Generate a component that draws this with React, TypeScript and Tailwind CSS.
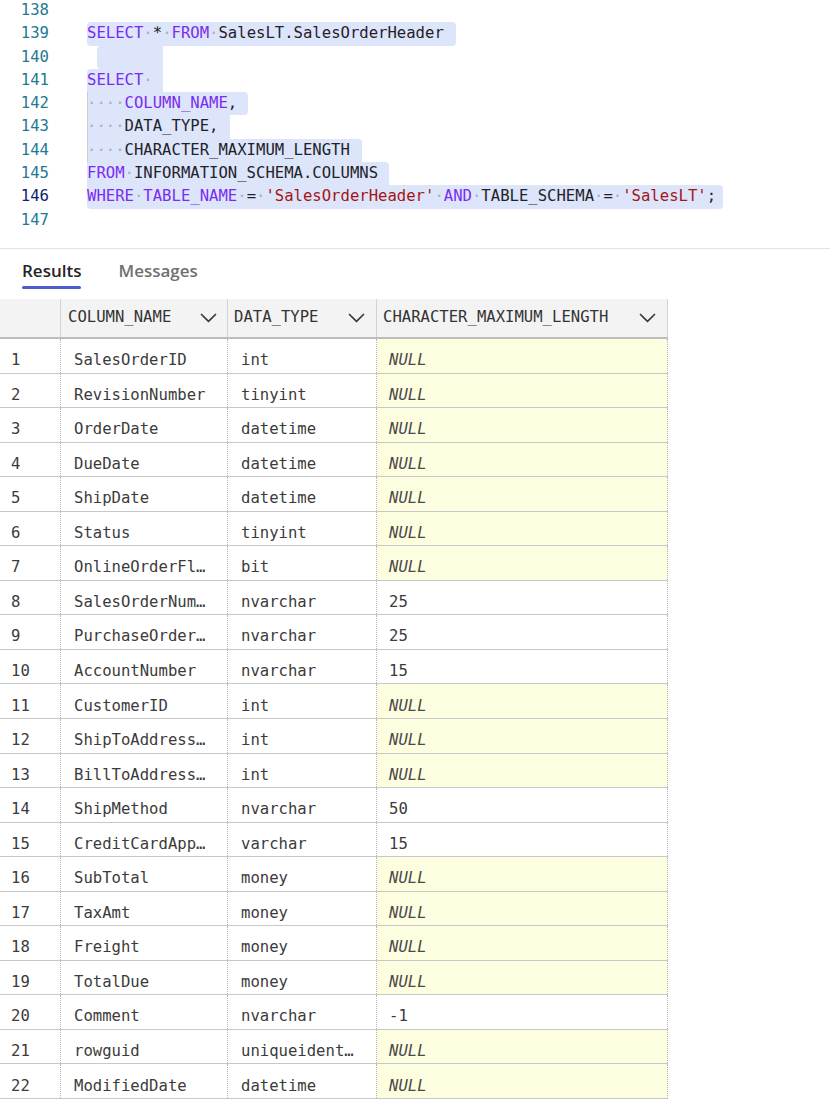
import React from "react"

type Tok = [string, string]

const tokColor: Record<string, string> = {
  k: "text-[#7a2cf0]",
  i: "text-[#1f2328]",
  s: "text-[#a31515]",
  w: "text-[#a9afbc]",
  p: "text-[#1f2328]",
}

const sp = (n = 1): Tok => ["w", "·".repeat(n)]

const codeLines: { n: number; hl?: string; guide?: boolean; toks?: Tok[] }[] = [
  { n: 138 },
  {
    n: 139,
    hl: "w-[369px] rounded-[4px]",
    toks: [["k", "SELECT"], sp(), ["p", "*"], sp(), ["k", "FROM"], sp(), ["i", "SalesLT.SalesOrderHeader"]],
  },
  { n: 140, hl: "ml-[10px] w-[66px] rounded-l-[4px]", toks: [] },
  { n: 141, hl: "w-[76px] rounded-tl-[4px]", toks: [["k", "SELECT"], sp()] },
  { n: 142, hl: "w-[161px] rounded-r-[4px]", guide: true, toks: [sp(4), ["k", "COLUMN_NAME"], ["p", ","]] },
  { n: 143, hl: "w-[143px]", guide: true, toks: [sp(4), ["i", "DATA_TYPE"], ["p", ","]] },
  { n: 144, hl: "w-[275px] rounded-tr-[4px]", guide: true, toks: [sp(4), ["i", "CHARACTER_MAXIMUM_LENGTH"]] },
  { n: 145, hl: "w-[302px] rounded-tr-[4px]", toks: [["k", "FROM"], sp(), ["i", "INFORMATION_SCHEMA.COLUMNS"]] },
  {
    n: 146,
    hl: "w-[636px] rounded-tr-[4px] rounded-b-[4px]",
    toks: [
      ["k", "WHERE"], sp(), ["k", "TABLE_NAME"], sp(), ["p", "="], sp(), ["s", "'SalesOrderHeader'"], sp(),
      ["k", "AND"], sp(), ["i", "TABLE_SCHEMA"], sp(), ["p", "="], sp(), ["s", "'SalesLT'"], ["p", ";"],
    ],
  },
  { n: 147 },
]

const rows: [string, string, string][] = [
  ["SalesOrderID", "int", "NULL"],
  ["RevisionNumber", "tinyint", "NULL"],
  ["OrderDate", "datetime", "NULL"],
  ["DueDate", "datetime", "NULL"],
  ["ShipDate", "datetime", "NULL"],
  ["Status", "tinyint", "NULL"],
  ["OnlineOrderFl…", "bit", "NULL"],
  ["SalesOrderNum…", "nvarchar", "25"],
  ["PurchaseOrder…", "nvarchar", "25"],
  ["AccountNumber", "nvarchar", "15"],
  ["CustomerID", "int", "NULL"],
  ["ShipToAddress…", "int", "NULL"],
  ["BillToAddress…", "int", "NULL"],
  ["ShipMethod", "nvarchar", "50"],
  ["CreditCardApp…", "varchar", "15"],
  ["SubTotal", "money", "NULL"],
  ["TaxAmt", "money", "NULL"],
  ["Freight", "money", "NULL"],
  ["TotalDue", "money", "NULL"],
  ["Comment", "nvarchar", "-1"],
  ["rowguid", "uniqueident…", "NULL"],
  ["ModifiedDate", "datetime", "NULL"],
]

function Chevron() {
  return (
    <svg width="17" height="10" viewBox="0 0 17 10" fill="none" className="shrink-0">
      <path d="M1.5 1.5 L8.5 8.3 L15.5 1.5" stroke="#3a3a3a" strokeWidth="1.7" strokeLinecap="round" strokeLinejoin="round" />
    </svg>
  )
}

function Editor() {
  return (
    <div className="mt-[-1px] font-['DejaVu_Sans_Mono',monospace] text-[15.6px]">
      {codeLines.map((line) => (
        <div key={line.n} className="flex h-[23.3px] items-stretch">
          <div
            className={`w-[49px] shrink-0 text-right leading-[23.3px] ${
              line.n === 146 ? "text-[#0b216f]" : "text-[#237893]"
            }`}
          >
            {line.n}
          </div>
          <div className="ml-[38px] flex">
            {line.hl !== undefined && (
              <div
                className={`h-full whitespace-pre leading-[23.3px] bg-[#dde5fb] ${line.hl} ${
                  line.guide ? "shadow-[inset_1px_0_0_#c9ccd3]" : ""
                }`}
              >
                {line.toks?.map((t, i) => (
                  <span key={i} className={tokColor[t[0]]}>
                    {t[1]}
                  </span>
                ))}
              </div>
            )}
          </div>
        </div>
      ))}
    </div>
  )
}

function Tabs() {
  return (
    <div className="mt-[16px] border-t border-[#e3e3e3] pl-[22px] pt-[10px] font-['Open_Sans',sans-serif]">
      <div className="flex gap-[37px]">
        <div className="flex flex-col">
          <span className="text-[17px] leading-[23px] font-semibold text-[#242424]">Results</span>
          <div className="mt-[4px] h-[3px] rounded-full bg-[#4f5bd0]" />
        </div>
        <span className="text-[17px] leading-[23px] font-semibold text-[#707070]">Messages</span>
      </div>
    </div>
  )
}

function ResultsGrid() {
  return (
    <div className="mt-[10px] w-[668px] font-['DejaVu_Sans_Mono',monospace] text-[15.6px]">
      <div className="grid h-[40px] grid-cols-[61px_167px_149px_291px] border-b-2 border-[#bdbdbd] bg-[#f3f3f3] text-[#333333]">
        <div className="border-r border-[#d2d2d2]" />
        <div className="flex items-center justify-between border-r border-[#d2d2d2] pl-[7px] pr-[10px]">
          <span>COLUMN_NAME</span>
          <Chevron />
        </div>
        <div className="flex items-center justify-between border-r border-[#d2d2d2] pl-[6px] pr-[11px]">
          <span>DATA_TYPE</span>
          <Chevron />
        </div>
        <div className="flex items-center justify-between border-r border-[#d2d2d2] pl-[6px] pr-[11px]">
          <span>CHARACTER_MAXIMUM_LENGTH</span>
          <Chevron />
        </div>
      </div>
      {rows.map(([name, type, len], i) => {
        const isNull = len === "NULL"
        return (
          <div
            key={i}
            className="grid h-[34.55px] grid-cols-[61px_167px_149px_291px] border-b border-[#c8c8c8] text-[#3b3b3b]"
          >
            <div className="flex items-center border-r border-dotted border-[#b5b5b5] pl-[11px] pt-[10px]">
              {i + 1}
            </div>
            <div className="flex items-center truncate border-r border-dotted border-[#b5b5b5] pl-[13px] pt-[10px]">
              {name}
            </div>
            <div className="flex items-center truncate border-r border-dotted border-[#b5b5b5] pl-[13px] pt-[10px]">
              {type}
            </div>
            <div
              className={`flex items-center border-r border-dotted border-[#b5b5b5] pl-[12px] pt-[10px] ${
                isNull ? "bg-[#fdfddf] italic text-[#4a4a4a]" : ""
              }`}
            >
              {len}
            </div>
          </div>
        )
      })}
    </div>
  )
}

export default function App() {
  return (
    <div className="h-[1119px] w-[830px] overflow-hidden bg-white">
      <Editor />
      <Tabs />
      <ResultsGrid />
    </div>
  )
}
